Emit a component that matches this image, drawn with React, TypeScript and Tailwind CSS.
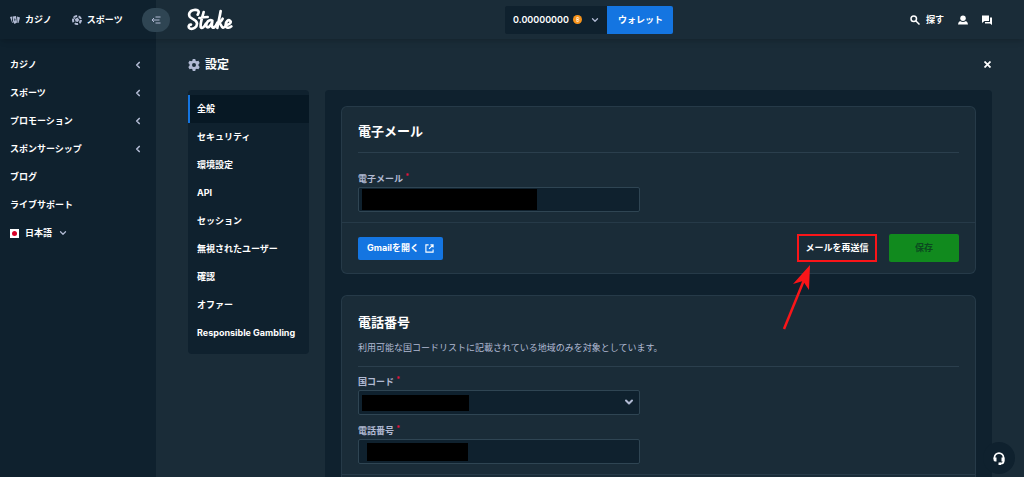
import type { ReactNode } from "react";
import { ChevronDown, ChevronLeft } from "lucide-react";

type Item = { label: string; sub?: boolean };

const menu: Item[] = [
  { label: "カジノ", sub: true },
  { label: "スポーツ", sub: true },
  { label: "プロモーション", sub: true },
  { label: "スポンサーシップ", sub: true },
  { label: "ブログ" },
  { label: "ライブサポート" },
];

const tabs = [
  "全般",
  "セキュリティ",
  "環境設定",
  "API",
  "セッション",
  "無視されたユーザー",
  "確認",
  "オファー",
  "Responsible Gambling",
];

function CardsIcon() {
  return (
    <svg viewBox="0 0 20 20" className="w-[10px] h-[10px]" fill="#b1bad3">
      <path d="M0 4 L4 3 L4 12 L7 16 L4 15 Z" />
      <path d="M5 3 L12 2 L14 15 L9 18 L6 13 Z" />
      <path d="M14 3 L20 5 L17 16 L15 16 Z" />
      <path d="M9 6 l2 3 l-1 4 l-2 -3 Z" fill="#3c4d60" />
    </svg>
  );
}

function BallIcon() {
  return (
    <svg viewBox="0 0 20 20" className="w-[10px] h-[10px]">
      <circle cx="10" cy="10" r="8" fill="none" stroke="#b1bad3" strokeWidth="4" strokeDasharray="7 3" />
      <path d="M6 8 L11 5 L14 9 L12 14 L7 13 Z" fill="#b1bad3" />
      <path d="M2 5 L7 9 M18 14 L13 11" stroke="#b1bad3" strokeWidth="2" />
    </svg>
  );
}

function CollapseIcon() {
  return (
    <svg viewBox="0 0 20 16" className="w-[10px] h-2" fill="none" stroke="#b1bad3" strokeWidth="2">
      <path d="M9 2 H19 M2 8 H17 M9 14 H19 M6 4 L2 8 L6 12" />
    </svg>
  );
}

function StakeLogo() {
  return (
    <svg viewBox="0 0 138 72" className="w-[46px] h-6" fill="none" stroke="#fff" strokeWidth="8" strokeLinecap="round" strokeLinejoin="round">
      <path d="M32 20 C40 8 30 4 20 6 C8 8 4 18 8 26 C12 33 29 34 30 46 C31 58 17 66 8 61 C3 57 5 49 12 50" />
      <path d="M50 12 C45 31 39 48 41 57 C44 64 52 57 56 48 M37 30 C46 28 53 27 62 27" />
      <path d="M76 38 C67 32 56 44 58 54 C61 63 71 56 76 41 C73 52 75 61 80 59 C85 57 88 51 91 44" />
      <path d="M101 9 C98 28 93 46 91 60 M93 47 C100 42 105 37 107 32 M97 46 C102 45 102 57 108 59 C113 60 116 54 118 51" />
      <path d="M118 51 C129 50 134 42 129 38 C124 34 116 41 116 50 C116 60 126 62 133 55" />
    </svg>
  );
}

function GearIcon() {
  return (
    <svg viewBox="0 0 24 24" className="w-3 h-3" fill="#b1bad3">
      <path
        fillRule="evenodd"
        d="M9.500 0 H14.500 L15.300 3.400 L17.500 4.700 L20.900 3.700 L23.400 8 L21 10.600 V13.400 L23.400 16 L20.900 20.300 L17.500 19.300 L15.300 20.600 L14.500 24 H9.500 L8.700 20.600 L6.500 19.300 L3.100 20.300 L0.600 16 L3 13.400 V10.600 L0.600 8 L3.100 3.700 L6.500 4.700 L8.700 3.400 Z M12 8 A4 4 0 1 0 12 16 A4 4 0 1 0 12 8 Z"
      />
    </svg>
  );
}

function SearchIcon() {
  return (
    <svg viewBox="0 0 20 20" className="w-[10px] h-[10px]" fill="none" stroke="#fff" strokeWidth="3">
      <circle cx="7.500" cy="7.500" r="5.500" />
      <path d="M12 12 L19 19" />
    </svg>
  );
}

function UserIcon() {
  return (
    <svg viewBox="0 0 20 20" className="w-[10px] h-[10px]" fill="#fff">
      <circle cx="10" cy="6.500" r="5.500" />
      <path d="M4 12 Q10 16 16 12 Q20 14 20 19 H0 Q0 14 4 12 Z" />
    </svg>
  );
}

function ChatIcon() {
  return (
    <svg viewBox="0 0 20 20" className="w-[10px] h-[10px]" fill="#fff">
      <path d="M0 1 H14 V12 H5 L0 16 Z" />
      <path d="M16 5 H20 V20 L16 17 H6 V14 H16 Z" />
    </svg>
  );
}

function ExternalIcon() {
  return (
    <svg viewBox="0 0 20 20" className="w-[9px] h-[9px]" fill="none" stroke="#fff" strokeWidth="2.500">
      <path d="M8 2 H2 V18 H18 V12 M12 2 H18 V8 M18 2 L9 11" />
    </svg>
  );
}

function HeadsetIcon() {
  return (
    <svg viewBox="0 0 24 26" className="w-3 h-[13px]">
      <path d="M3 14 V11 A9 9 0 0 1 21 11 V19 Q21 23 16 23 H13" fill="none" stroke="#fff" strokeWidth="3.500" />
      <path d="M1 11 H7 V19 H4 Q1 19 1 15 Z M17 11 H23 V19 H17 Z M11 21 H16 V26 H11 Z" fill="#fff" />
    </svg>
  );
}

function Field({ id, label, children }: { id: string; label: string; children: ReactNode }) {
  return (
    <div className="max-w-[282px]">
      <label htmlFor={id} className="block h-4 leading-4 font-bold text-[#b1bad3]">
        {label} <span className="align-top text-[7px] leading-3 text-[#e9113c]">*</span>
      </label>
      <div className="relative">{children}</div>
    </div>
  );
}

const fieldClass =
  "block w-full h-[25px] appearance-none rounded-xs border border-[#2f4553] bg-[#0f212e] px-2 text-white outline-none";

export default function App() {
  return (
    <div className="relative h-screen overflow-hidden bg-[#1a2c38] text-[9px] font-bold text-white font-['Inter','Noto_Sans_CJK_JP',sans-serif]">
      <header className="relative z-10 flex h-[39px] items-center shadow-md">
        <div className="flex h-full w-[156px] shrink-0 items-center bg-[#0f212e] pl-[10px]">
          <a href="#casino" className="flex items-center gap-[5px]">
            <CardsIcon />
            カジノ
          </a>
          <a href="#sports" className="ml-5 flex items-center gap-[5px]">
            <BallIcon />
            スポーツ
          </a>
        </div>
        <button aria-label="メニュー" className="-ml-[14px] flex h-6 w-7 shrink-0 items-center justify-center rounded-full bg-[#2f4553]">
          <CollapseIcon />
        </button>
        <a href="#home" aria-label="Stake" className="ml-[17px]">
          <StakeLogo />
        </a>
        <div className="flex flex-1 justify-center pl-9">
          <button className="flex h-7 w-[102px] items-center justify-center gap-1 rounded-l-xs bg-[#0f212e] font-semibold">
            0.00000000
            <span className="flex size-[9px] items-center justify-center rounded-full bg-[#f7931a]">
              <svg viewBox="0 0 10 10" className="size-[7px]" fill="none" stroke="#fff">
                <path d="M4 2 H6 Q8 3 6 5 H4 Z M4 5 H6 Q8 7 6 8 H4 Z" />
              </svg>
            </span>
            <ChevronDown size={10} strokeWidth={3} className="ml-1" color="#b1bad3" />
          </button>
          <button className="h-7 w-[66px] rounded-r-xs bg-[#1475e1]">ウォレット</button>
        </div>
        <div className="flex items-center gap-[14px] pr-[32px]">
          <button className="flex items-center gap-[6px]">
            <SearchIcon />
            探す
          </button>
          <button aria-label="アカウント"><UserIcon /></button>
          <button aria-label="チャット"><ChatIcon /></button>
        </div>
      </header>

      <div className="flex h-full">
        <aside className="w-[156px] shrink-0 bg-[#0f212e] pt-3">
          <nav>
            {menu.map((m) => (
              <a key={m.label} href="#menu" className="flex h-7 items-center justify-between pl-[10px] pr-[13px]">
                {m.label}
                {m.sub && <ChevronLeft size={10} strokeWidth={4} color="#b1bad3" />}
              </a>
            ))}
          </nav>
          <button className="flex h-7 items-center gap-[6px] pl-[10px]">
            <span className="flex size-[9px] items-center justify-center bg-white">
              <span className="size-[5px] rounded-full bg-[#d80027]" />
            </span>
            日本語
            <ChevronDown size={10} strokeWidth={3} color="#b1bad3" />
          </button>
        </aside>

        <main className="min-w-0 flex-1 px-8">
          <div className="flex h-[51px] items-center justify-between">
            <h1 className="flex items-center gap-[5px] text-[12px]">
              <GearIcon />
              設定
            </h1>
            <button aria-label="閉じる" className="flex size-[9px] items-center justify-center">
              <svg viewBox="0 0 14 14" className="size-[7px]" stroke="#fff" strokeWidth="3.500">
                <path d="M1 1 L13 13 M13 1 L1 13" />
              </svg>
            </button>
          </div>

          <div className="flex items-start gap-4">
            <nav className="w-[121px] shrink-0 rounded-sm bg-[#0f212e] pb-[7px] pt-[5px]">
              {tabs.map((t, i) => (
                <a
                  key={t}
                  href="#tab"
                  className={
                    i === 0
                      ? "flex h-[28px] items-center border-l-2 border-[#1475e1] bg-[#071824] pl-[7px]"
                      : "flex h-[28px] items-center border-l-2 border-transparent pl-[7px]"
                  }
                >
                  {t}
                </a>
              ))}
            </nav>

            <div className="flex min-w-0 flex-1 flex-col gap-[21px] rounded-sm bg-[#0f212e] p-4">
              <section className="rounded-md border border-[#2f4553]/60 bg-[#1a2c38]">
                <div className="px-4 pb-[10px]">
                  <h2 className="flex h-[46px] items-center border-b border-[#2f4553]/80 pt-1 text-[13px]">電子メール</h2>
                  <div className="pt-[18px]">
                    <Field id="email" label="電子メール">
                      <input id="email" type="email" className={fieldClass} />
                      <span className="absolute left-[4px] top-[2px] h-[21px] w-[175px] bg-black" />
                    </Field>
                  </div>
                </div>
                <div className="flex items-center border-t border-[#2f4553]/60 px-4 py-[11px]">
                  <button className="flex h-[23px] w-[85px] items-center justify-center gap-[6px] rounded-xs bg-[#1475e1]">
                    Gmailを開く
                    <ExternalIcon />
                  </button>
                  <div className="relative ml-auto mr-3">
                    <button className="h-7 w-20 border-2 border-[#fa1519]">メールを再送信</button>
                    <svg viewBox="0 0 30 66" className="absolute -left-[15px] top-[31px] h-[66px] w-[30px]">
                      <path d="M2 64 L22 15" stroke="#fa1519" strokeWidth="2.500" />
                      <path d="M28 0 L27 25 L21 16 L11 19 Z" fill="#fa1519" />
                    </svg>
                  </div>
                  <button className="h-7 w-[70px] rounded-xs bg-[#118a1e] text-[#0b4a20]">保存</button>
                </div>
              </section>

              <section className="rounded-md border border-[#2f4553]/60 bg-[#1a2c38]">
                <div className="px-4 pb-[10px]">
                  <div className="border-b border-[#2f4553]/80 pb-[10px] pt-[14px]">
                    <h2 className="text-[13px] leading-6">電話番号</h2>
                    <p className="pt-[6px] leading-4 font-normal text-[#b1bad3]">
                      利用可能な国コードリストに記載されている地域のみを対象としています。
                    </p>
                  </div>
                  <div className="flex flex-col gap-2 pt-[7px]">
                    <Field id="country" label="国コード">
                      <select id="country" className={fieldClass} />
                      <span className="absolute left-[4px] top-[5px] h-4 w-[107px] bg-black" />
                      <ChevronDown size={12} strokeWidth={4} color="#b1bad3" className="pointer-events-none absolute right-[5px] top-[6px]" />
                    </Field>
                    <Field id="phone" label="電話番号">
                      <input id="phone" type="tel" className={fieldClass} />
                      <span className="absolute left-[9px] top-1 h-[18px] w-[101px] bg-black" />
                    </Field>
                  </div>
                </div>
                <div className="h-[50px] border-t border-[#2f4553]/60" />
              </section>
            </div>
          </div>
        </main>
      </div>

      <button aria-label="サポート" className="absolute bottom-[3px] right-[9px] flex size-8 items-center justify-center rounded-full bg-[#0f212e]">
        <HeadsetIcon />
      </button>
    </div>
  );
}
